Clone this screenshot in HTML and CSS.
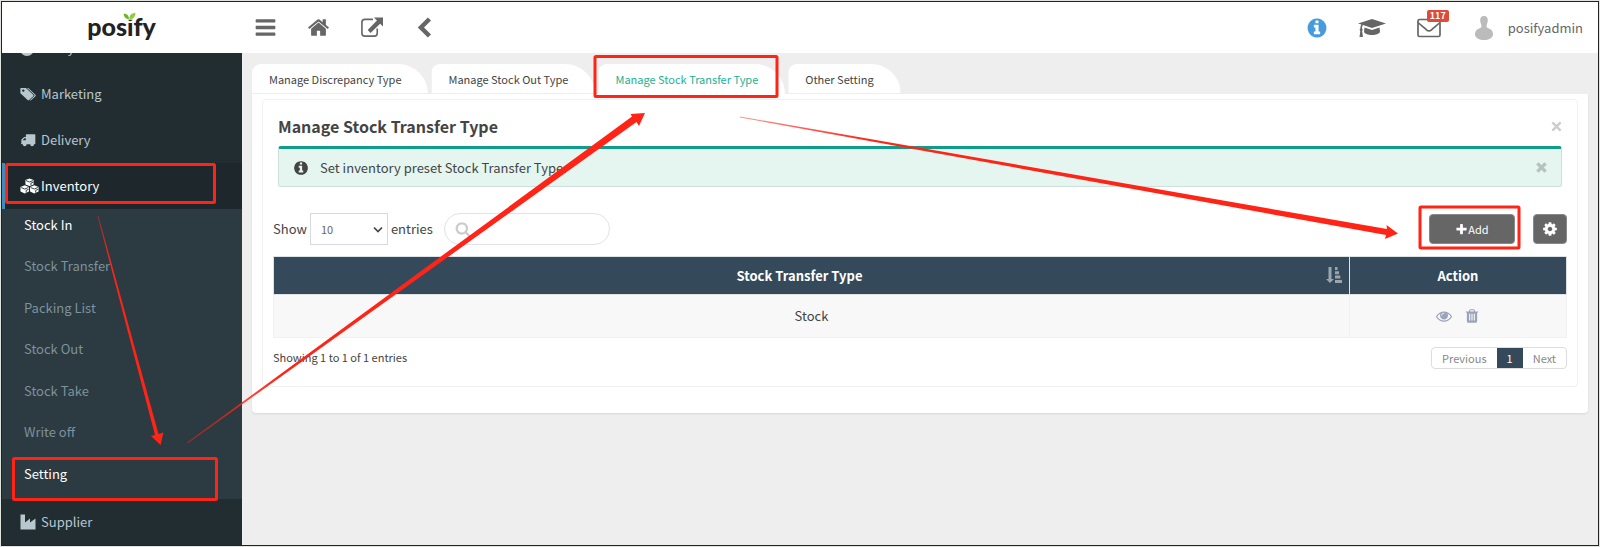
FILE: index.html
```
<!DOCTYPE html>
<html lang="en">
<head>
    <meta charset="UTF-8">
    <meta name="viewport" content="width=device-width, initial-scale=1.0">
    <title>Manage Stock Transfer Type</title>
    <link rel="stylesheet" href="styles.css">
</head>
<body>
    <div class="frame">
        <header class="header">
            <a href="#" class="logo">posify
                <svg class="logo-leaf" viewBox="0 0 24 16"><rect x="6" y="8" width="12" height="6" fill="#fff"/><path d="M11 13C5 13 2 9 1 3c6-1 10 3 10 10z" fill="#6fb52c"/><path d="M12 13C11 6 15 2 23 1c0 7-4 12-11 12z" fill="#8ccf3c"/></svg>
            </a>
            <nav class="toolbar">
                <a href="#" aria-label="Menu"><svg class="icon-lg" viewBox="0 0 1792 1792"><path d="M1664 1344v128q0 26-19 45t-45 19h-1408q-26 0-45-19t-19-45v-128q0-26 19-45t45-19h1408q26 0 45 19t19 45zm0-512v128q0 26-19 45t-45 19h-1408q-26 0-45-19t-19-45v-128q0-26 19-45t45-19h1408q26 0 45 19t19 45zm0-512v128q0 26-19 45t-45 19h-1408q-26 0-45-19t-19-45v-128q0-26 19-45t45-19h1408q26 0 45 19t19 45z"/></svg></a>
                <a href="#" aria-label="Home"><svg class="icon-lg" viewBox="0 0 1792 1792"><path d="M1472 992v480q0 26-19 45t-45 19h-384v-384h-256v384h-384q-26 0-45-19t-19-45v-480q0-1 .5-3t.5-3l575-474 575 474q1 2 1 6zm223-69l-62 74q-8 9-21 11h-3q-13 0-21-7l-692-577-692 577q-12 8-24 7-13-2-21-11l-62-74q-8-10-7-23.5t11-21.5l719-599q32-26 76-26t76 26l244 204v-195q0-14 9-23t23-9h192q14 0 23 9t9 23v408l219 182q10 8 11 21.5t-7 23.5z"/></svg></a>
                <a href="#" aria-label="Open in new window"><svg class="icon-lg" viewBox="0 0 24 24"><path d="M13.500 3.500H5a3 3 0 0 0-3 3V18a3 3 0 0 0 3 3h10a3 3 0 0 0 3-3v-5" fill="none" stroke="currentColor" stroke-width="1.700"/><path d="M14.500 1.500H24V11l-3-3L11 17.700 8 14.700 17.700 4.700z"/></svg></a>
                <a href="#" aria-label="Back"><svg class="icon-lg" viewBox="0 0 24 24"><path d="M15.500 1.500l3.300 3.300L11.500 12l7.300 7.200-3.300 3.300L5 12z"/></svg></a>
            </nav>
            <div class="user-menu">
                <a href="#" class="info" aria-label="Information"><svg class="icon-md" viewBox="0 0 1792 1792"><path d="M1152 1376v-160q0-14-9-23t-23-9h-96v-512q0-14-9-23t-23-9h-320q-14 0-23 9t-9 23v160q0 14 9 23t23 9h96v320h-96q-14 0-23 9t-9 23v160q0 14 9 23t23 9h448q14 0 23-9t9-23zm-128-896v-160q0-14-9-23t-23-9h-192q-14 0-23 9t-9 23v160q0 14 9 23t23 9h192q14 0 23-9t9-23zm640 416q0 209-103 385.500t-279.500 279.500-385.500 103-385.500-103-279.500-279.500-103-385.500 103-385.500 279.500-279.500 385.500-103 385.500 103 279.500 279.500 103 385.500z"/></svg></a>
                <a href="#" aria-label="Tutorials"><svg class="icon-cap" viewBox="0 0 28 20"><path d="M14 1l14 4.500L14 10 5 7.100c-.8.900-1 2-1 3.500.9.600.9 1.700.1 2.300L5 19H1.500l.8-6.100c-.8-.6-.8-1.700.1-2.300 0-1.600.2-3 1-4.100L0 5.500z"/><path d="M6.500 9.500L14 12l7.500-2.500.5 4c0 2-4 3.500-8 3.500s-8-1.500-8-3.500z"/></svg></a>
                <a href="#" class="mail" aria-label="Messages"><svg class="icon-mail" viewBox="0 0 24 20"><path d="M1 3a1.500 1.500 0 0 1 1.500-1.500h19A1.500 1.500 0 0 1 23 3v14a1.500 1.500 0 0 1-1.500 1.500h-19A1.500 1.500 0 0 1 1 17zM1 4.500c3 2.800 6 5 8.500 7.300 1.800 1.600 3.200 1.600 5 0C17 9.500 20 7.300 23 4.500" fill="none" stroke="currentColor" stroke-width="1.700"/></svg><span class="badge">117</span></a>
                <a href="#" class="account"><svg class="avatar" viewBox="0 0 18 24"><path d="M9 0c2.600 0 4 2 3.800 4.600-.1 2-.8 3.300-1.200 4.800-.3 1.500.2 2.300 1.800 2.800C16.600 13.200 18 15 18 18.500c0 3.500-4.500 5.500-9 5.500s-9-2-9-5.500c0-3.500 1.400-5.300 4.600-6.300 1.600-.5 2.100-1.300 1.800-2.800-.4-1.500-1.100-2.800-1.200-4.800C5 2 6.400 0 9 0z"/></svg>posifyadmin</a>
            </div>
        </header>

        <div class="wrapper">
            <aside class="sidebar">
                <nav class="menu">
                    <a href="#" class="menu-item"><svg class="icon" viewBox="0 0 16 16"><path d="M7 2v7h7a7 7 0 1 1-7-7zM9 0a7 7 0 0 1 7 7H9z"/></svg>Analytics</a>
                    <a href="#" class="menu-item"><svg class="icon" viewBox="0 0 17 15"><path fill-rule="evenodd" d="M1 1h5.300L14 8.300c.5.500.5 1 0 1.500L9.600 14c-.5.500-1 .5-1.500 0L.4 6.600V1.600C.4 1.200.6 1 1 1zm2.500 1.600a1.300 1.300 0 1 0 0 2.600 1.300 1.300 0 0 0 0-2.600z"/><path d="M7.500 1h1.300l7.600 7.300c.5.500.5 1 0 1.500L12 14c-.5.500-1 .5-1.500.1l4.600-4.400c.5-.5.500-1 0-1.500z"/></svg>Marketing</a>
                    <a href="#" class="menu-item"><svg class="icon" viewBox="0 0 17 15"><path fill-rule="evenodd" d="M7 1.500h8.500c.5 0 .8.300.8.800v9c0 .6-.4.800-1.400.8a2 2 0 0 1-4 0H7a2 2 0 0 1-4 0c-1.500 0-1.800-.2-1.800-.8 0-.4.200-.5.200-.8V8c0-.5.100-.8.400-1.200l2-2c.4-.4.700-.5 1.200-.5h1.200v-2c0-.5.300-.8.800-.8zM2.800 7.800h3.400V5.700H4.700z"/></svg>Delivery</a>
                    <a href="#" class="menu-item active"><svg class="icon-wide" viewBox="0 0 20 16"><path d="M10 0l4.300 1.700v4.600L10 8 5.700 6.300V1.700zM5 7.200l4.400 1.800v4.900L5 16 .5 13.900V9zM15 7.200L19.500 9v4.900L15 16l-4.400-2.100V9z"/><path d="M6.300 2.300L10 3.800l3.700-1.500M1.200 9.600L5 11.200l3.800-1.600M11.200 9.600l3.800 1.600 3.800-1.600M11.500 7V5l2.600-1M6.500 15v-2.500l2.500-1M16.500 15v-2.500l2.500-1" fill="none" stroke="#1e282c" stroke-width=".9"/></svg>Inventory</a>
                    <div class="submenu">
                        <a href="#" class="current">Stock In</a>
                        <a href="#">Stock Transfer</a>
                        <a href="#">Packing List</a>
                        <a href="#">Stock Out</a>
                        <a href="#">Stock Take</a>
                        <a href="#">Write off</a>
                        <a href="#" class="current">Setting</a>
                    </div>
                    <a href="#" class="menu-item"><svg class="icon" viewBox="0 0 16 16"><path d="M.5.500h4.500v8l5-4v4l5.500-4v11H.5z"/></svg>Supplier</a>
                </nav>
            </aside>

            <main class="content">
                <nav class="tabs">
                    <a href="#">Manage Discrepancy Type</a>
                    <a href="#">Manage Stock Out Type</a>
                    <a href="#" class="selected">Manage Stock Transfer Type</a>
                    <a href="#">Other Setting</a>
                </nav>
                <div class="tab-content">
                    <section class="panel">
                        <div class="panel-title">
                            <h1>Manage Stock Transfer Type</h1>
                            <button type="button" class="close" aria-label="Close panel"><svg class="icon-x" viewBox="0 0 12 12"><path d="M1.500 1.500l9 9m0-9l-9 9" stroke="currentColor" stroke-width="2.600"/></svg></button>
                        </div>
                        <div class="alert">
                            <svg class="icon" viewBox="0 0 1792 1792"><path d="M1152 1376v-160q0-14-9-23t-23-9h-96v-512q0-14-9-23t-23-9h-320q-14 0-23 9t-9 23v160q0 14 9 23t23 9h96v320h-96q-14 0-23 9t-9 23v160q0 14 9 23t23 9h448q14 0 23-9t9-23zm-128-896v-160q0-14-9-23t-23-9h-192q-14 0-23 9t-9 23v160q0 14 9 23t23 9h192q14 0 23-9t9-23zm640 416q0 209-103 385.500t-279.500 279.500-385.500 103-385.500-103-279.500-279.500-103-385.500 103-385.500 279.500-279.500 385.500-103 385.500 103 279.500 279.500 103 385.500z"/></svg>
                            <span>Set inventory preset Stock Transfer Type.</span>
                            <button type="button" class="close" aria-label="Close alert"><svg class="icon-x" viewBox="0 0 12 12"><path d="M1.500 1.500l9 9m0-9l-9 9" stroke="currentColor" stroke-width="3.800"/></svg></button>
                        </div>
                        <div class="controls">
                            <label for="entries">Show</label>
                            <div class="select-box">
                                <select id="entries"><option>10</option><option>25</option><option>50</option></select>
                                <svg class="select-arrow" viewBox="0 0 10 8"><path d="M1 1.500l4 4 4-4" fill="none" stroke="currentColor" stroke-width="1.700"/></svg>
                            </div>
                            <span>entries</span>
                            <div class="search-box">
                                <svg class="icon" viewBox="0 0 1792 1792"><path d="M1216 832q0-185-131.500-316.500t-316.500-131.500-316.500 131.500-131.500 316.500 131.500 316.500 316.500 131.500 316.500-131.500 131.500-316.500zm512 832q0 52-38 90t-90 38q-54 0-90-38l-343-342q-179 124-399 124-143 0-273.500-55.500t-225-150-150-225-55.500-273.500 55.500-273.500 150-225 225-150 273.500-55.500 273.500 55.500 225 150 150 225 55.500 273.500q0 220-124 399l343 343q37 37 37 90z"/></svg>
                                <input type="search" aria-label="Search">
                            </div>
                            <div class="actions">
                                <button type="button" class="btn btn-add"><svg class="icon-sm" viewBox="0 0 1792 1792"><path d="M1600 736v192q0 40-28 68t-68 28h-416v416q0 40-28 68t-68 28h-192q-40 0-68-28t-28-68v-416h-416q-40 0-68-28t-28-68v-192q0-40 28-68t68-28h416v-416q0-40 28-68t68-28h192q40 0 68 28t28 68v416h416q40 0 68 28t28 68z"/></svg>Add</button>
                                <button type="button" class="btn btn-gear" aria-label="Table settings"><svg class="icon" viewBox="0 0 1792 1792"><path d="M1152 896q0-106-75-181t-181-75-181 75-75 181 75 181 181 75 181-75 75-181zm512-109v222q0 12-8 23t-20 13l-185 28q-19 54-39 91 35 50 107 138 10 12 10 25t-9 23q-27 37-99 108t-94 71q-12 0-26-9l-138-108q-44 23-91 38-16 136-29 186-7 28-36 28h-222q-14 0-24.500-8.500t-11.500-21.500l-28-184q-49-16-90-37l-141 107q-10 9-25 9-14 0-25-11-126-114-165-168-7-10-7-23 0-12 8-23 15-21 51-66.500t54-70.500q-27-50-41-99l-183-27q-13-2-21-12.500t-8-23.500v-222q0-12 8-23t19-13l186-28q14-46 39-92-40-57-107-138-10-12-10-24 0-10 9-23 26-36 98.500-107.500t94.500-71.500q13 0 26 10l138 107q44-23 91-38 16-136 29-186 7-28 36-28h222q14 0 24.500 8.500t11.500 21.500l28 184q49 16 90 37l142-107q9-9 24-9 13 0 25 10 129 119 165 170 7 8 7 22 0 12-8 23-15 21-51 66.500t-54 70.500q26 50 41 98l183 28q13 2 21 12.500t8 23.500z"/></svg></button>
                            </div>
                        </div>
                        <table class="data-table">
                            <thead>
                                <tr>
                                    <th class="sortable">Stock Transfer Type<svg class="sort" viewBox="0 0 16 16"><path d="M2.500 0h3v12H8l-4 4-4-4h2.500zM9 0h2.500v3H9zM9 4.300h4v3H9zM9 8.600h5.300v3H9zM9 13h7v3H9z"/></svg></th>
                                    <th class="col-action">Action</th>
                                </tr>
                            </thead>
                            <tbody>
                                <tr>
                                    <td>Stock</td>
                                    <td>
                                        <div class="row-actions">
                                            <a href="#" aria-label="View"><svg class="icon" viewBox="0 0 1792 1792"><path d="M1664 960q-152-236-381-353 61 104 61 225 0 185-131.500 316.500t-316.500 131.500-316.500-131.500-131.500-316.500q0-121 61-225-229 117-381 353 133 205 333.500 326.500t434.500 121.500 434.500-121.500 333.500-326.500zm-720-384q0-20-14-34t-34-14q-125 0-214.500 89.500t-89.500 214.500q0 20 14 34t34 14 34-14 14-34q0-86 61-147t147-61q20 0 34-14t14-34zm848 384q0 34-20 69-140 230-376.500 368.500t-499.500 138.500-499.500-139-376.500-368q-20-35-20-69t20-69q140-229 376.500-368t499.500-139 499.500 139 376.500 368q20 35 20 69z"/></svg></a>
                                            <a href="#" aria-label="Delete"><svg class="icon" viewBox="0 0 1792 1792"><path d="M704 1376v-704q0-14-9-23t-23-9h-64q-14 0-23 9t-9 23v704q0 14 9 23t23 9h64q14 0 23-9t9-23zm256 0v-704q0-14-9-23t-23-9h-64q-14 0-23 9t-9 23v704q0 14 9 23t23 9h64q14 0 23-9t9-23zm256 0v-704q0-14-9-23t-23-9h-64q-14 0-23 9t-9 23v704q0 14 9 23t23 9h64q14 0 23-9t9-23zm-544-992h448l-48-117q-7-9-17-11h-317q-10 2-17 11zm928 32v64q0 14-9 23t-23 9h-96v948q0 83-47 143.500t-113 60.500h-832q-66 0-113-58.500t-47-141.500v-952h-96q-14 0-23-9t-9-23v-64q0-14 9-23t23-9h309l70-167q15-37 54-63t79-26h320q40 0 79 26t54 63l70 167h309q14 0 23 9t9 23z"/></svg></a>
                                        </div>
                                    </td>
                                </tr>
                            </tbody>
                        </table>
                        <div class="table-footer">
                            <span>Showing 1 to 1 of 1 entries</span>
                            <nav class="pagination">
                                <a href="#">Previous</a>
                                <a href="#" class="page">1</a>
                                <a href="#">Next</a>
                            </nav>
                        </div>
                    </section>
                </div>
            </main>
        </div>
    </div>

    <!-- walkthrough markers -->
    <svg class="guide" width="1600" height="547" viewBox="0 0 1600 547">
        <defs>
            <linearGradient id="fade1" gradientUnits="userSpaceOnUse" x1="98" y1="217" x2="161" y2="445"><stop offset="0" stop-color="#ff2416" stop-opacity=".5"/><stop offset=".2" stop-color="#ff2416"/></linearGradient>
            <linearGradient id="fade2" gradientUnits="userSpaceOnUse" x1="187" y1="443" x2="645" y2="113"><stop offset="0" stop-color="#ff2416" stop-opacity=".5"/><stop offset=".2" stop-color="#ff2416"/></linearGradient>
            <linearGradient id="fade3" gradientUnits="userSpaceOnUse" x1="740" y1="117" x2="1398" y2="234"><stop offset="0" stop-color="#ff2416" stop-opacity=".5"/><stop offset=".2" stop-color="#ff2416"/></linearGradient>
        </defs>
        <g fill="none" stroke="#ff2416" stroke-width="3">
            <rect x="6.500" y="164.500" width="208" height="38" rx="1"/>
            <rect x="13.500" y="458.500" width="203" height="41" rx="1"/>
            <rect x="595" y="56.500" width="182" height="40" rx="1"/>
            <rect x="1420" y="207" width="99" height="41" rx="1"/>
        </g>
        <path fill="url(#fade1)" d="M97.500 216L98.500 216 158.500 434 163.500 432.500 160.500 445 151 436 155 435z"/>
        <path fill="url(#fade2)" d="M187 442.500L632 116.500 630.500 114 645 113 639 126 636.500 122 187.500 443.500z"/>
        <path fill="url(#fade3)" d="M740 116.500L1387 229 1386.500 225 1398 233.500 1385 239 1386 235 740 117.500z"/>
    </svg>
</body>
</html>
```
FILE: styles.css
```
* {
    box-sizing: border-box;
}
body {
    margin: 0;
    padding: 1px;
    background-color: #dfe4df;
    color: #444;
    font-family: "Noto Sans CJK SC", "Noto Sans", sans-serif;
    font-size: 13px;
    line-height: 20px;
}
a {
    color: inherit;
    text-decoration: none;
}
svg {
    display: block;
    flex: none;
    fill: currentColor;
}
button, input, select {
    font: inherit;
}
.frame {
    display: flex;
    flex-direction: column;
    height: calc(100vh - 2px);
    border: 1px solid #222;
    background-color: #eee;
    overflow: hidden;
}

/* icons */
.icon {
    width: 16px;
    height: 16px;
}
.icon-sm {
    width: 13px;
    height: 13px;
}
.icon-md {
    width: 22px;
    height: 22px;
}
.icon-lg {
    width: 23px;
    height: 23px;
}
.icon-wide {
    width: 19px;
    height: 16px;
}
.icon-x {
    width: 11px;
    height: 11px;
}

/* header */
.header {
    display: flex;
    align-items: center;
    height: 51px;
    flex: none;
    background-color: #fff;
    color: #666;
}
.logo {
    position: relative;
    width: 239px;
    padding-bottom: 3px;
    text-align: center;
    font-family: Lato, sans-serif;
    font-size: 25px;
    font-weight: 900;
    color: #222;
}
.logo-leaf {
    position: absolute;
    left: 121px;
    top: -4px;
    width: 13px;
    height: 9px;
}
.toolbar {
    display: flex;
    gap: 30px;
    margin-left: 13px;
}
.user-menu {
    display: flex;
    align-items: center;
    margin-left: auto;
    margin-right: 15px;
}
.info {
    color: #479bdc;
    margin-right: 30px;
}
.icon-cap {
    width: 28px;
    height: 20px;
    margin-right: 31px;
}
.mail {
    position: relative;
    margin-right: 34px;
}
.icon-mail {
    width: 24px;
    height: 20px;
}
.badge {
    position: absolute;
    left: 10px;
    top: -8px;
    padding: 0 3px;
    border-radius: 2px;
    background-color: #dd4b39;
    color: #fff;
    font-size: 9px;
    font-weight: 700;
    line-height: 12px;
}
.account {
    display: flex;
    align-items: center;
    gap: 15px;
}
.avatar {
    width: 18px;
    height: 24px;
    color: #bbb;
}

/* sidebar */
.wrapper {
    display: flex;
    flex: 1;
    min-height: 0;
}
.sidebar {
    width: 240px;
    flex: none;
    overflow: hidden;
    background-color: #222d32;
    color: #b8c7ce;
}
.menu {
    margin-top: -28px;
}
.menu-item {
    display: flex;
    align-items: center;
    height: 46px;
    padding-left: 15px;
    border-left: 3px solid transparent;
}
.menu-item .icon {
    margin-right: 5px;
}
.menu-item .icon-wide {
    margin-right: 2px;
}
.menu-item.active {
    border-left-color: #3c8dbc;
    background-color: #1e282c;
    color: #fff;
}
.submenu {
    display: grid;
    grid-auto-rows: 1fr;
    min-height: 290px;
    padding-left: 22px;
    background-color: #2c3a41;
    color: #7c939d;
}
.submenu a {
    padding-top: 6px;
}
.submenu .current {
    color: #fff;
}

/* tabs */
.content {
    flex: 1;
    padding: 11px 10px;
}
.tabs {
    display: flex;
    gap: 3px;
    font-size: 11px;
}
.tabs a {
    height: 30px;
    padding: 5px 27px 5px 17px;
    border-radius: 12px 40px 0 0;
    border-bottom: 1px solid #eee;
    background-color: #fff;
}
.tabs .selected {
    border-bottom-color: #fff;
    color: #1ab394;
}
.tab-content {
    padding: 5px 10px 26px;
    border-radius: 0 0 4px 4px;
    background-color: #fff;
    box-shadow: 0 1px 2px rgba(0, 0, 0, 0.1);
}
.panel {
    padding: 11px 10px 17px;
    border: 1px solid #f0f0f0;
    border-radius: 4px;
}
.panel-title {
    display: flex;
    align-items: center;
    justify-content: space-between;
    padding: 0 5px;
}
.panel-title h1 {
    margin: 0;
    font-size: 16px;
    font-weight: 600;
    line-height: 30px;
}
.close {
    padding: 0;
    border: none;
    background: none;
    color: #ccc;
    cursor: pointer;
}
.alert {
    display: flex;
    align-items: center;
    height: 41px;
    margin: 5px 5px 26px;
    padding: 0 14px;
    border: 1px solid #cfe0da;
    border-top: 3px solid #0f9d8a;
    border-radius: 3px;
    background-color: #e5f6f0;
}
.alert span {
    margin-left: 11px;
}
.alert .close {
    margin-left: auto;
    color: #b5c4be;
}

/* table controls */
.controls {
    display: flex;
    align-items: center;
    height: 32px;
}
.select-box {
    position: relative;
    width: 78px;
    margin: 0 3px;
}
.select-box select {
    width: 100%;
    height: 32px;
    padding: 0 10px;
    border: 1px solid #d8d8e4;
    border-radius: 0;
    background-color: #fff;
    color: #666;
    font-size: 11px;
    appearance: none;
}
.select-arrow {
    position: absolute;
    right: 5px;
    top: 13px;
    width: 10px;
    height: 8px;
}
.search-box {
    display: flex;
    align-items: center;
    width: 166px;
    height: 32px;
    margin-left: 11px;
    padding: 0 10px;
    border: 1px solid #e2e2ea;
    border-radius: 16px;
    color: #ccc;
}
.search-box input {
    width: 100%;
    min-width: 0;
    border: none;
    outline: none;
    background: none;
}
.actions {
    display: flex;
    gap: 18px;
    margin-left: auto;
}
.btn {
    display: flex;
    align-items: center;
    justify-content: center;
    height: 30px;
    padding: 0;
    border: 1px solid #888;
    border-radius: 4px;
    background-color: #666;
    color: #fff;
    font-size: 11px;
    cursor: pointer;
}
.btn-add {
    width: 86px;
}
.btn-gear {
    width: 34px;
}

/* table */
.data-table {
    width: 100%;
    margin-top: 11px;
    border-collapse: collapse;
    text-align: center;
}
.data-table th {
    position: relative;
    height: 38px;
    padding: 0;
    border: 1px solid #dfe3e6;
    background-color: #34495a;
    color: #fff;
    font-weight: 700;
}
.data-table .sortable {
    padding-right: 24px;
}
.data-table td {
    height: 43px;
    padding: 0;
    border: 1px solid #f1f1f1;
    background-color: #f8f8f8;
}
.data-table .col-action {
    width: 217px;
}
.sort {
    position: absolute;
    right: 7px;
    top: 10px;
    width: 16px;
    height: 16px;
    color: #9aa5ae;
}
.row-actions {
    display: flex;
    justify-content: center;
    gap: 12px;
    color: #9aa3b8;
}
.table-footer {
    display: flex;
    align-items: flex-start;
    justify-content: space-between;
    padding-top: 9px;
    font-size: 11px;
}
.pagination {
    display: flex;
    border: 1px solid #ddd;
    border-radius: 4px;
    color: #888;
}
.pagination a {
    padding: 0 10px;
}
.pagination .page {
    background-color: #34495a;
    color: #fff;
}

.guide {
    position: absolute;
    left: 0;
    top: 0;
    pointer-events: none;
}
```
